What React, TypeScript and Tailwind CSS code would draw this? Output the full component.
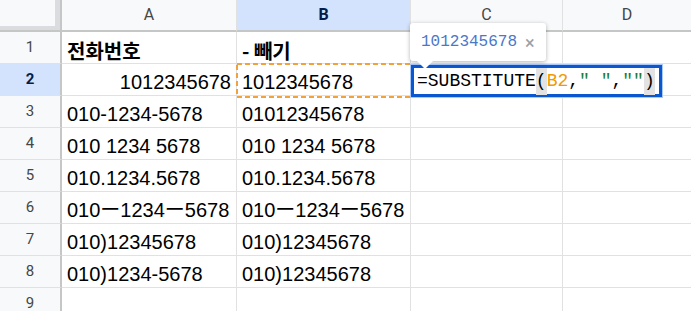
import React from "react";

const cellFont = { fontFamily: '"Liberation Sans", Arial, "Noto Sans CJK KR", sans-serif' };
const monoFont = { fontFamily: '"Liberation Mono", "DejaVu Sans Mono", monospace' };
const hdrFont = { fontFamily: 'Roboto, "Liberation Sans", Arial, sans-serif' };

const rowsA = [
  "",
  "010-1234-5678",
  "010 1234 5678",
  "010.1234.5678",
  "010ー1234ー5678",
  "010)12345678",
  "010)1234-5678",
  "",
];
const rowsB = [
  "1012345678",
  "01012345678",
  "010 1234 5678",
  "010.1234.5678",
  "010ー1234ー5678",
  "010)12345678",
  "010)12345678",
  "",
];

function ColHeader({ label, selected, last }: { label: string; selected?: boolean; last?: boolean }) {
  return (
    <div
      className={
        "h-[32px] flex items-center justify-center border-b-2 border-b-[#c4c7c5] " +
        (last ? "" : "border-r border-r-[#e1e1e1] ") +
        (selected ? "bg-[#d3e3fd] text-[#041e49] font-bold" : "bg-[#f8f9fa] text-[#444746]")
      }
      style={hdrFont}
    >
      <span className="text-[16px] leading-none">{label}</span>
    </div>
  );
}

function RowHeader({ n, selected }: { n: number; selected?: boolean }) {
  return (
    <div
      className={
        "h-[32px] flex items-center justify-center border-r-2 border-r-[#c4c7c5] border-b border-b-[#e1e1e1] " +
        (selected ? "bg-[#d3e3fd] text-[#041e49] font-bold" : "bg-[#f8f9fa] text-[#444746]")
      }
      style={hdrFont}
    >
      <span className="text-[15px] leading-none">{n}</span>
    </div>
  );
}

function Cell({ children, right, bold, last }: { children?: React.ReactNode; right?: boolean; bold?: boolean; last?: boolean }) {
  return (
    <div
      className={
        "h-[32px] flex items-end px-[5px] pb-[1px] border-b border-b-[#e1e1e1] text-black text-[20px] leading-[23px] whitespace-nowrap overflow-visible " +
        (last ? "" : "border-r border-r-[#e1e1e1] ") +
        (right ? "justify-end " : "") +
        (bold ? "font-bold" : "")
      }
      style={cellFont}
    >
      {children}
    </div>
  );
}

export default function App() {
  const rowNums = [1, 2, 3, 4, 5, 6, 7, 8, 9];
  return (
    <div className="w-[691px] h-[311px] overflow-hidden bg-white relative">
      <div className="grid grid-cols-[62px_175px_174px_152px_1fr]">
        {/* header */}
        <div className="h-[32px] bg-[#f8f9fa] border-r-2 border-r-[#c4c7c5] border-b-2 border-b-[#c4c7c5] flex">
          <div className="flex-1 flex flex-col">
            <div className="flex-1 bg-[#f8f9fa]" />
            <div className="h-[4px] bg-[#dadce0]" />
          </div>
          <div className="w-[5px] bg-[#dadce0]" />
        </div>
        <ColHeader label="A" />
        <ColHeader label="B" selected />
        <ColHeader label="C" />
        <ColHeader label="D" last />

        {rowNums.map((n, i) => (
          <React.Fragment key={n}>
            <RowHeader n={n} selected={n === 2} />
            {n === 1 ? (
              <>
                <Cell bold>
                  <span style={{ fontFamily: '"Noto Sans CJK KR", sans-serif' }} className="leading-[23px]">전화번호</span>
                </Cell>
                <Cell bold>
                  <span style={{ fontFamily: '"Noto Sans CJK KR", sans-serif' }} className="leading-[23px]">- 빼기</span>
                </Cell>
              </>
            ) : n === 2 ? (
              <>
                <Cell right>1012345678</Cell>
                <Cell>{rowsB[0]}</Cell>
              </>
            ) : (
              <>
                <Cell>{rowsA[i - 1]}</Cell>
                <Cell>{rowsB[i - 1]}</Cell>
              </>
            )}
            <Cell />
            <Cell last />
          </React.Fragment>
        ))}
      </div>

      {/* dashed reference highlight on B2 */}
      <svg className="absolute left-[236px] top-[63px]" width="176" height="35">
        <rect x="1" y="1" width="174" height="33" fill="none" stroke="#f4a13a" strokeWidth="2" strokeDasharray="5 3" />
      </svg>

      {/* formula editor box */}
      <div className="absolute left-[410px] top-[64px] w-[253px] h-[34px] border border-[#a8c7fa]">
        <div className="w-full h-full border-[3px] border-[#0b57d0] bg-white flex items-center pl-[3px] text-[18px] text-black whitespace-nowrap" style={monoFont}>
          <span>=SUBSTITUTE</span>
          <span className="bg-[#e3e3e3]">(</span>
          <span className="text-[#f29900]">B2</span>
          <span>,</span>
          <span className="text-[#188038]">" "</span>
          <span>,</span>
          <span className="text-[#188038]">""</span>
          <span className="bg-[#e3e3e3]">)</span>
        </div>
      </div>

      {/* tooltip */}
      <div className="absolute left-[410px] top-[23px] w-[136px] h-[38px] bg-white rounded-[3px] shadow-[0_1px_4px_rgba(0,0,0,0.3)] flex items-center pl-[11px]">
        <span className="text-[16px] text-[#4a78c8]" style={monoFont}>1012345678</span>
        <span className="ml-[8px] text-[18px] text-[#9aa0a6]" style={hdrFont}>×</span>
        <div className="absolute left-[6px] -bottom-[8px] w-0 h-0 border-l-[9px] border-l-transparent border-r-[9px] border-r-transparent border-t-[9px] border-t-white" />
      </div>
    </div>
  );
}
